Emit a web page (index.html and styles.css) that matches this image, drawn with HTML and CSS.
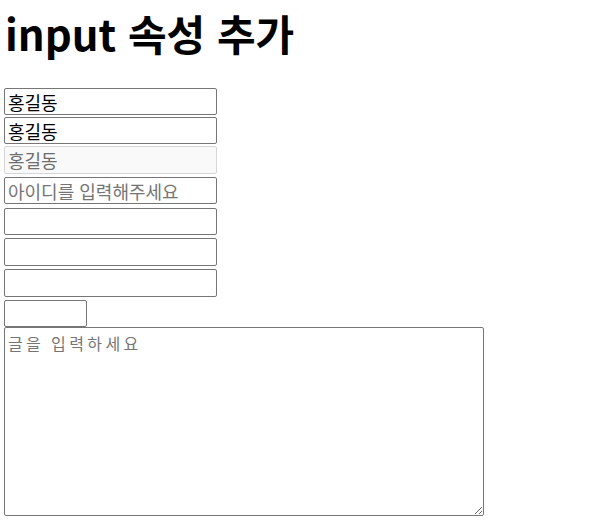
FILE: index.html
```html
<!DOCTYPE html>
<html lang="ko">
<head>
<meta charset="utf-8">
<title>input 속성 추가</title>
<link rel="stylesheet" href="styles.css">
</head>
<body>
<h1 class="title">input 속성 추가</h1>
<form class="fields">
  <input class="field f1" type="text" value="홍길동">
  <input class="field f2" type="text" value="홍길동" readonly>
  <input class="field f3" type="text" value="홍길동" disabled>
  <input class="field f4" type="text" placeholder="아이디를 입력해주세요">
  <input class="field f5" type="text">
  <input class="field f6" type="password">
  <input class="field f7" type="email">
  <input class="field f8 short" type="text">
  <textarea class="memo" placeholder="글을 입력하세요"></textarea>
</form>
</body>
</html>
```

FILE: styles.css
```css
html, body {
  margin: 0;
  padding: 0;
  background: #fff;
}
body {
  padding: 0 4px;
  font-family: "Noto Sans CJK KR", "Noto Sans", sans-serif;
  color: #000;
}
.title {
  margin: 8px 0 0 1px;
  font-size: 42px;
  line-height: 50px;
  font-weight: 700;
}
.fields {
  display: flex;
  flex-direction: column;
  align-items: flex-start;
  margin-top: 30px;
}
.field {
  box-sizing: border-box;
  width: 213px;
  height: 27px;
  margin: 0;
  padding: 0 3px;
  border: 1px solid #767676;
  border-radius: 2px;
  background: #fff;
  font-family: "Noto Sans CJK KR", "Noto Sans", sans-serif;
  font-size: 18px;
  color: #000;
  outline: none;
}
.field::placeholder {
  color: #757575;
}
.f2 { margin-top: 2px; }
.f3 {
  margin-top: 2px;
  height: 28px;
  background: #f9f9f9;
  border-color: #d6d6d6;
  color: #6d6d6d;
}
.f4 { margin-top: 3px; }
.f5 { margin-top: 4px; }
.f6 { margin-top: 3px; height: 28px; }
.f7 { margin-top: 3px; height: 28px; }
.f8 { margin-top: 3px; }
.short { width: 83px; }
.memo {
  box-sizing: border-box;
  width: 480px;
  height: 189px;
  margin: 0;
  padding: 3px 3px;
  border: 1px solid #767676;
  border-radius: 2px;
  font-family: "Noto Sans CJK KR", monospace;
  font-size: 16px;
  letter-spacing: 3.4px;
  word-spacing: -1px;
  outline: none;
}
.memo::placeholder {
  color: #757575;
}
```
